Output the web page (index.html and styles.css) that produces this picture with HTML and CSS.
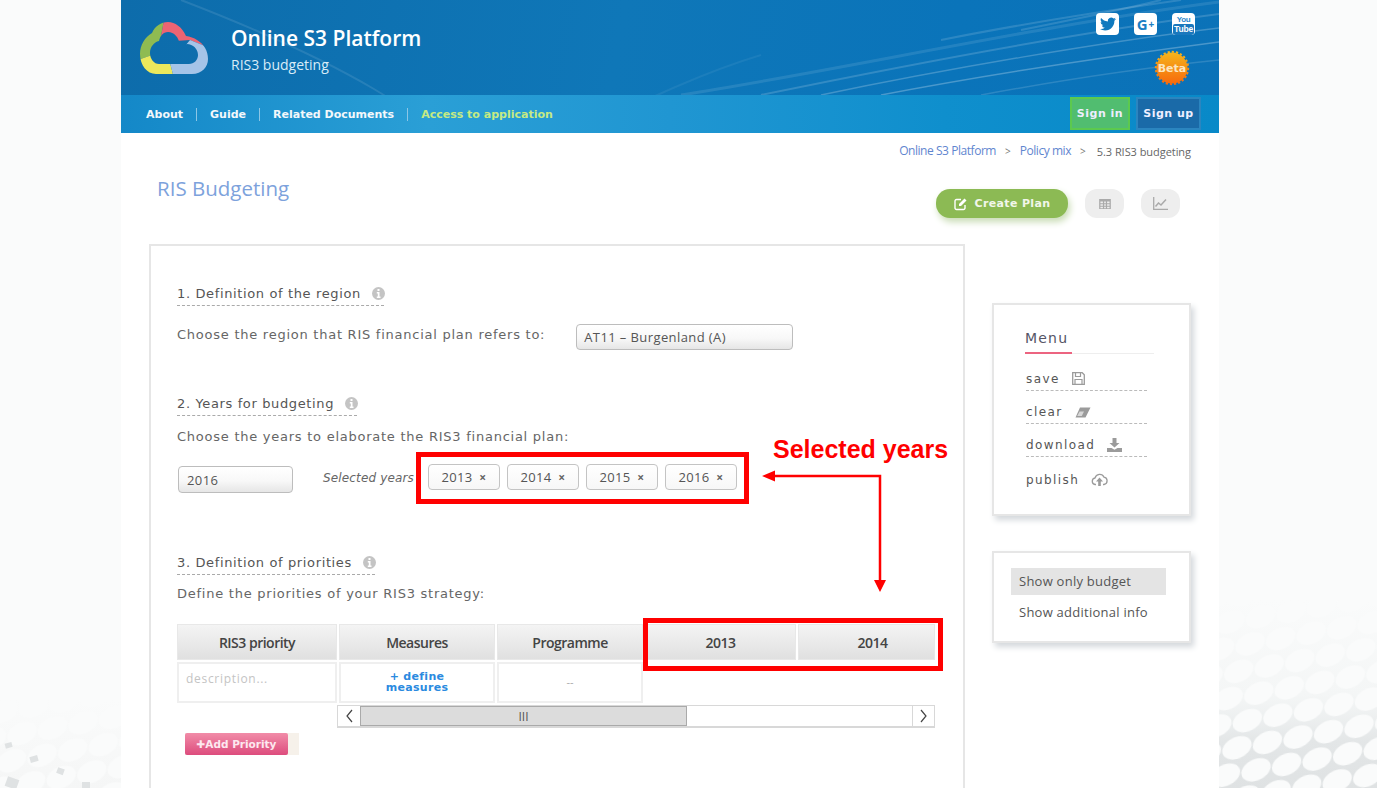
FILE: index.html
```html
<!DOCTYPE html>
<html lang="en">
<head>
<meta charset="utf-8">
<title>RIS Budgeting</title>
<link rel="stylesheet" href="styles.css">
</head>
<body>
<svg class="backdrop" width="1377" height="788" viewBox="0 0 1377 788" aria-hidden="true">
  <defs>
    <linearGradient id="fade" x1="0" y1="0" x2="0" y2="1">
      <stop offset="0" stop-color="#eef1f1" stop-opacity="0"/>
      <stop offset=".5" stop-color="#eef1f1" stop-opacity=".5"/>
      <stop offset=".75" stop-color="#e3e6e7"/>
      <stop offset="1" stop-color="#dfe2e3"/>
    </linearGradient>
    <linearGradient id="fadeL" x1="0" y1="0" x2="0" y2="1">
      <stop offset="0" stop-color="#f5f6f6" stop-opacity="0"/>
      <stop offset="1" stop-color="#f5f6f6"/>
    </linearGradient>
    <pattern id="dots" width="31" height="50" patternUnits="userSpaceOnUse" patternTransform="rotate(-10 1300 760)">
      <ellipse cx="15" cy="12" rx="15.5" ry="10.5" fill="#fafbfb" transform="rotate(-16 15 12)"/>
      <ellipse cx="0" cy="37" rx="15.5" ry="10.5" fill="#fafbfb" transform="rotate(-16 0 37)"/>
      <ellipse cx="31" cy="37" rx="15.5" ry="10.5" fill="#fafbfb" transform="rotate(-16 31 37)"/>
    </pattern>
  </defs>
  <rect x="1219" y="600" width="158" height="188" fill="url(#fade)"/>
  <rect x="1219" y="600" width="158" height="188" fill="url(#dots)"/>
  <rect x="0" y="700" width="121" height="88" fill="url(#fadeL)"/>
  <rect x="0" y="700" width="121" height="88" fill="url(#dots)"/>
  <g fill="#dfe2e3">
    <rect x="5" y="743" width="7" height="5" transform="rotate(-15 8 745)"/>
    <rect x="30" y="756" width="8" height="6" transform="rotate(-15 34 759)"/>
    <rect x="57" y="768" width="7" height="6" transform="rotate(20 60 771)"/>
    <rect x="6" y="778" width="12" height="10" transform="rotate(20 12 783)"/>
    <rect x="82" y="782" width="8" height="6"/>
  </g>
</svg>

<div class="page">
  <header class="site-head">
    <svg class="streaks" width="1098" height="133" viewBox="0 0 1098 133" aria-hidden="true">
      <g fill="none" stroke="#fff">
        <path d="M60 0C190 50 340 120 370 200" stroke-opacity=".1" stroke-width="2"/>
        <path d="M560 95C720 70 920 25 1098 2" stroke-opacity=".1" stroke-width="3"/>
        <path d="M640 95C800 62 960 32 1098 14" stroke-opacity=".16" stroke-width="2"/>
        <path d="M700 95C820 70 980 42 1098 28" stroke-opacity=".22" stroke-width="1.500"/>
        <path d="M760 95C860 76 990 56 1098 42" stroke-opacity=".26" stroke-width="1.500"/>
        <path d="M860 95C930 82 1020 68 1098 60" stroke-opacity=".14" stroke-width="1.500"/>
        <path d="M820 40C900 24 990 10 1060 0" stroke-opacity=".14" stroke-width="2"/>
        <path d="M900 30C950 20 1000 10 1040 0" stroke-opacity=".14" stroke-width="2"/>
        <path d="M460 133C520 100 590 70 640 55" stroke-opacity=".06" stroke-width="2"/>
      </g>
    </svg>
    <div class="brand-row">
      <svg class="logo" width="70" height="54" viewBox="0 0 70 54" aria-label="Logo">
        <defs>
          <clipPath id="ring">
            <path clip-rule="evenodd" d="M16 52H52C62 52 68 45 68 37C68 29 64 22 57 18C54 16 50 14.5 46 14C42 5 35 0 28 0C21 0 15 4 12 11C5 15 0 23 0 32C0 43 7 52 16 52ZM19 42H49C54 42 58 38 58 33C58 27 53 22 47 22L40 24C39 15 34 10 28 10C23 10 20 14 19 19C14 20 10 25 10 31C10 37 14 42 19 42Z"/>
          </clipPath>
        </defs>
        <g clip-path="url(#ring)">
          <polygon fill="#8fbb52" points="-2,-2 24,-2 20,20 12,33 -2,38"/>
          <polygon fill="#ec6473" points="24,-2 72,-2 72,27 50,18 20,20"/>
          <polygon fill="#ebe85c" points="-2,38 12,33 18,41 30,41 34,56 -2,56"/>
          <polygon fill="#a5c4e8" points="30,41 34,56 72,56 72,27 50,18 45,24"/>
        </g>
      </svg>
      <div class="brand-text">
        <div class="brand-title">Online S3 Platform</div>
        <div class="brand-sub">RIS3 budgeting</div>
      </div>
      <div class="head-right">
        <div class="socials">
          <a class="social">
            <svg width="16" height="16" viewBox="0 0 24 24"><path fill="#1079be" d="M23.953 4.57a10 10 0 01-2.825.775 4.958 4.958 0 002.163-2.723c-.951.555-2.005.959-3.127 1.184a4.92 4.92 0 00-8.384 4.482C7.69 8.095 4.067 6.13 1.64 3.162a4.822 4.822 0 00-.666 2.475c0 1.71.87 3.213 2.188 4.096a4.904 4.904 0 01-2.228-.616v.06a4.923 4.923 0 003.946 4.827 4.996 4.996 0 01-2.212.085 4.936 4.936 0 004.604 3.417 9.867 9.867 0 01-6.102 2.105c-.39 0-.779-.023-1.17-.067a13.995 13.995 0 007.557 2.209c9.053 0 13.998-7.496 13.998-13.985 0-.21 0-.42-.015-.63A9.935 9.935 0 0024 4.59z"/></svg>
          </a>
          <a class="social social-g">G<span class="plus">+</span></a>
          <a class="social social-yt"><span class="yt-you">You</span><span class="yt-tube">Tube</span></a>
        </div>
        <div class="beta">
          <svg width="36" height="36" viewBox="0 0 36 36" aria-hidden="true">
            <defs>
              <linearGradient id="betaFill" x1="0" y1="0" x2="0" y2="1">
                <stop offset="0" stop-color="#f5b51c"/>
                <stop offset="1" stop-color="#f76a0c"/>
              </linearGradient>
            </defs>
            <circle cx="18" cy="18" r="15.5" fill="url(#betaFill)"/>
            <circle cx="18" cy="18" r="16.2" fill="none" stroke="url(#betaFill)" stroke-width="2" stroke-dasharray="2.2 2"/>
          </svg>
          <span class="beta-label">Beta</span>
        </div>
      </div>
    </div>
    <nav class="nav-row">
      <a class="nav-link">About</a>
      <a class="nav-link">Guide</a>
      <a class="nav-link">Related Documents</a>
      <a class="nav-link nav-accent">Access to application</a>
      <div class="auth">
        <a class="auth-btn auth-in">Sign in</a>
        <a class="auth-btn auth-up">Sign up</a>
      </div>
    </nav>
  </header>

  <main class="content">
    <div class="crumbs">
      <a class="crumb">Online S3 Platform</a><span class="crumb-sep">&gt;</span>
      <a class="crumb">Policy mix</a><span class="crumb-sep">&gt;</span>
      <span class="crumb-now">5.3 RIS3 budgeting</span>
    </div>

    <div class="title-row">
      <h1 class="page-title">RIS Budgeting</h1>
      <div class="actions">
        <a class="create-btn">
          <svg width="14" height="14" viewBox="0 0 14 14" aria-hidden="true"><path fill="none" stroke="#fff" stroke-width="1.4" d="M11 8v3a1.5 1.5 0 01-1.5 1.5h-7A1.5 1.5 0 011 11V4a1.5 1.5 0 011.5-1.5H7"/><path fill="#fff" d="M5 7l5.5-5.5 2 2L7 9H5z"/></svg>
          Create Plan
        </a>
        <a class="round-btn">
          <svg width="12" height="10" viewBox="0 0 14 12" aria-hidden="true"><path fill="#aaa" fill-rule="evenodd" d="M0 0h14v12H0zM1.500 3v2h3V3zm4.500 0v2h2V3zm3.500 0v2h3V3zM1.500 6.200v1.800h3V6.200zm4.500 0v1.800h2V6.200zm3.500 0v1.800h3V6.200zM1.500 9.200V11h3V9.200zm4.500 0V11h2V9.200zm3.500 0V11h3V9.200z"/></svg>
        </a>
        <a class="round-btn">
          <svg width="15" height="13" viewBox="0 0 15 13" aria-hidden="true"><path fill="none" stroke="#aaa" stroke-width="1.300" d="M.7 0v12.300H15"/><path fill="none" stroke="#aaa" stroke-width="1.500" d="M2.500 9.500l3-3.500 2.500 2 5-5.500"/></svg>
        </a>
      </div>
    </div>

    <div class="columns">
      <section class="card">
        <div class="sec-head first">1. Definition of the region
          <svg class="info" width="13" height="13" viewBox="0 0 13 13" aria-hidden="true"><circle cx="6.500" cy="6.500" r="6.500" fill="#c4c4c4"/><rect x="5.500" y="2" width="2" height="2" fill="#fff"/><path fill="#fff" d="M4.800 5h2.700v4.500h1V11H4.800V9.500h1V6.400h-1z"/></svg>
        </div>
        <div class="region-row">
          <span class="prompt">Choose the region that RIS financial plan refers to:</span>
          <div class="select region-select">AT11 – Burgenland (A)</div>
        </div>

        <div class="sec-head second">2. Years for budgeting
          <svg class="info" width="13" height="13" viewBox="0 0 13 13" aria-hidden="true"><circle cx="6.500" cy="6.500" r="6.500" fill="#c4c4c4"/><rect x="5.500" y="2" width="2" height="2" fill="#fff"/><path fill="#fff" d="M4.800 5h2.700v4.500h1V11H4.800V9.500h1V6.400h-1z"/></svg>
        </div>
        <p class="prompt prompt-block">Choose the years to elaborate the RIS3 financial plan:</p>
        <div class="years-row">
          <div class="select year-select">2016</div>
          <span class="years-label">Selected years</span>
          <div class="tags">
            <span class="tag">2013 <b class="tag-x">×</b></span>
            <span class="tag">2014 <b class="tag-x">×</b></span>
            <span class="tag">2015 <b class="tag-x">×</b></span>
            <span class="tag">2016 <b class="tag-x">×</b></span>
          </div>
        </div>

        <div class="sec-head third">3. Definition of priorities
          <svg class="info" width="13" height="13" viewBox="0 0 13 13" aria-hidden="true"><circle cx="6.500" cy="6.500" r="6.500" fill="#c4c4c4"/><rect x="5.500" y="2" width="2" height="2" fill="#fff"/><path fill="#fff" d="M4.800 5h2.700v4.500h1V11H4.800V9.500h1V6.400h-1z"/></svg>
        </div>
        <p class="prompt prompt-block tight">Define the priorities of your RIS3 strategy:</p>

        <div class="grid-table">
          <div class="th">RIS3 priority</div>
          <div class="th">Measures</div>
          <div class="th">Programme</div>
          <div class="th">2013</div>
          <div class="th th-clipped">2014</div>
          <div class="td td-desc">description...</div>
          <div class="td td-measures"><a class="define">+ define<br>measures</a></div>
          <div class="td td-dash">--</div>
        </div>
        <div class="scrollbar">
          <span class="scroll-arrow"><svg width="9" height="14" viewBox="0 0 9 14" aria-hidden="true"><path fill="none" stroke="#444" stroke-width="1.200" d="M7 1L2 7l5 6"/></svg></span>
          <span class="scroll-thumb">III</span>
          <span class="scroll-track"></span>
          <span class="scroll-arrow end"><svg width="9" height="14" viewBox="0 0 9 14" aria-hidden="true"><path fill="none" stroke="#444" stroke-width="1.200" d="M2 1l5 6-5 6"/></svg></span>
        </div>
        <div class="add-wrap"><a class="add-btn">✚Add Priority</a></div>
      </section>

      <aside class="side">
        <div class="side-card menu-card">
          <div class="menu-title"><span class="menu-title-text">Menu</span></div>
          <a class="menu-item">save
            <svg width="13" height="13" viewBox="0 0 13 13" aria-hidden="true"><path fill="none" stroke="#9b9b9b" stroke-width="1.300" d="M.7.7h9.500l2.100 2.100v9.500H.7z"/><path fill="none" stroke="#9b9b9b" stroke-width="1.200" d="M3.500 1v3.500h5V1M3 12V7.500h7V12"/></svg>
          </a>
          <a class="menu-item">clear
            <svg width="16" height="11" viewBox="0 0 16 11" aria-hidden="true"><path fill="#9b9b9b" d="M5 .5h10.500L10.500 10.500H.5z"/><path fill="#fff" d="M4.600 4.500h4.400L6.800 9H2.200z" opacity=".6"/></svg>
          </a>
          <a class="menu-item">download
            <svg width="15" height="14" viewBox="0 0 15 14" aria-hidden="true"><path fill="#9b9b9b" d="M5.500 0h4v5h3l-5 4.500-5-4.500h3zM0 10h4.500l3 1.800 3-1.800H15v4H0z"/></svg>
          </a>
          <a class="menu-item last">publish
            <svg width="17" height="13" viewBox="0 0 17 13" aria-hidden="true"><path fill="none" stroke="#9b9b9b" stroke-width="1.300" d="M5 11.500H4A3.300 3.300 0 014 5a4.800 4.800 0 019-.8A3.700 3.700 0 0113 11.500h-1"/><path fill="#9b9b9b" d="M8.500 4.500L12 8.500H9.800V13H7.200V8.500H5z"/></svg>
          </a>
        </div>
        <div class="side-card view-card">
          <a class="view-item active">Show only budget</a>
          <a class="view-item">Show additional info</a>
        </div>
      </aside>
    </div>
  </main>
</div>

<div class="mark mark-tags"></div>
<div class="mark mark-years"></div>
<div class="mark-text">Selected years</div>
<svg class="mark-arrow" width="130" height="130" viewBox="0 0 130 130" aria-hidden="true">
  <path fill="none" stroke="#f00" stroke-width="2.500" d="M12 13H118V119"/>
  <path fill="#f00" d="M0 13l13-5.500v11zM118 129l-6-12h12z"/>
</svg>
</body>
</html>
```

FILE: styles.css
```css
* { box-sizing: border-box; }
html, body { margin: 0; height: 788px; overflow: hidden; }
body {
  background: #fafbfb;
  font-family: "Open Sans", sans-serif;
  color: #555;
  position: relative;
}
a { color: inherit; text-decoration: none; }

.backdrop { position: absolute; left: 0; top: 0; z-index: 0; }

.page {
  position: relative;
  z-index: 1;
  width: 1098px;
  height: 788px;
  margin-left: 121px;
  background: #fff;
  overflow: hidden;
}

/* Header */
.site-head {
  position: relative;
  height: 133px;
  background: linear-gradient(100deg, #0d6cab 0%, #0f77b8 45%, #0a74ba 75%, #0b72b8 100%);
  color: #fff;
  display: flex;
  flex-direction: column;
}
.streaks { position: absolute; left: 0; top: 0; }
.brand-row {
  position: relative;
  height: 95px;
  display: flex;
  align-items: flex-start;
  padding: 22px 24px 0 19px;
}
.logo { flex: none; }
.brand-text { margin-left: 21px; }
.brand-title { font-size: 21px; font-weight: 600; line-height: 30px; margin-top: 1px; }
.brand-sub { font-size: 14px; line-height: 20px; margin-top: 2px; color: #d9ecf8; }
.head-right {
  margin-left: auto;
  margin-top: -9px;
  display: flex;
  flex-direction: column;
  align-items: flex-end;
}
.socials { display: flex; gap: 15px; }
.social {
  width: 23px;
  height: 22px;
  background: #fff;
  border-radius: 4px;
  display: flex;
  align-items: center;
  justify-content: center;
  color: #1a7fc4;
  overflow: hidden;
}
.social-g { font: 700 15px/22px "Open Sans", sans-serif; }
.plus { font-size: 10px; margin-left: 1px; }
.social-yt { flex-direction: column; font-family: "Liberation Sans", sans-serif; font-weight: 700; padding-top: 1px; }
.yt-you { font-size: 8px; line-height: 9px; color: #2b88cc; letter-spacing: -.3px; }
.yt-tube { font-size: 8.500px; line-height: 11px; background: #1a78bd; color: #fff; border-radius: 2px; padding: 0 1px; letter-spacing: -.2px; }
.beta {
  position: relative;
  width: 36px;
  height: 36px;
  margin-top: 15px;
  margin-right: 5px;
  display: flex;
  align-items: center;
  justify-content: center;
}
.beta svg { position: absolute; left: 0; top: 0; }
.beta-label { position: relative; font: 700 11px/1 "DejaVu Sans", sans-serif; color: #fbe6c0; }

.nav-row {
  position: relative;
  height: 38px;
  display: flex;
  align-items: center;
  padding: 0 18px 0 25px;
  background: linear-gradient(90deg, #1488c8 0%, #2a9fd6 28%, #2096d2 50%, #0f8fcd 75%, #0889c8 100%);
}
.nav-link {
  font: 700 11px/13px "DejaVu Sans", sans-serif;
  color: #f3f8fb;
  padding-right: 13px;
  margin-right: 13px;
  border-right: 1px solid #8cc6e6;
}
.nav-accent { color: #c5ea84; border-right: 0; }
.auth { margin-left: auto; display: flex; gap: 6px; align-self: flex-start; margin-top: 2px; }
.auth-btn {
  height: 33px;
  display: flex;
  align-items: center;
  justify-content: center;
  font: 700 11px/1 "DejaVu Sans", sans-serif;
  letter-spacing: .5px;
  color: #eef;
}
.auth-in { width: 60px; background: #51bd70; border: 2px solid #5cc94e; }
.auth-up { width: 65px; background: #1a6aa8; border: 2px solid #2b85bf; }

/* Main */
.content { padding: 0 28px; }
.crumbs {
  height: 35px;
  display: flex;
  justify-content: flex-end;
  align-items: center;
  font-size: 12px;
}
.crumb { color: #5f86cf; letter-spacing: -.45px; }
.crumb-sep { color: #777; margin: 0 9px; font-size: 10px; }
.crumb-now { color: #666; font-size: 11px; letter-spacing: -.05px; margin-left: 2px; margin-top: 2px; }

.title-row { height: 76px; display: flex; justify-content: space-between; align-items: flex-start; }
.page-title {
  margin: 6px 0 0 8px;
  font-size: 20.500px;
  font-weight: 400;
  line-height: 28px;
  color: #7da2dc;
}
.actions { display: flex; gap: 17px; padding: 21px 11px 0 0; }
.create-btn {
  width: 132px;
  height: 29px;
  border-radius: 14px;
  background: #8cba54;
  box-shadow: 2px 4px 7px #c9dcb5;
  color: #f1f6ea;
  font: 700 11px/29px "DejaVu Sans", sans-serif;
  letter-spacing: .35px;
  display: flex;
  align-items: center;
  justify-content: center;
  gap: 7px;
}
.round-btn {
  width: 39px;
  height: 29px;
  border-radius: 12px;
  background: #eee;
  display: flex;
  align-items: center;
  justify-content: center;
}

.columns { display: grid; grid-template-columns: 816px 199px; column-gap: 27px; align-items: start; }

.card {
  height: 700px;
  border: 2px solid #e6e6e6;
  padding: 0 0 0 26px;
}
.sec-head {
  display: flex;
  align-items: center;
  gap: 11px;
  height: 22px;
  padding-bottom: 2px;
  border-bottom: 1px dashed #aaa;
  font: 13px/18px "DejaVu Sans", sans-serif;
  letter-spacing: .63px;
  color: #555;
  white-space: nowrap;
}
.sec-head.first { margin-top: 38px; width: 207px; }
.sec-head.second { margin-top: 44px; width: 180px; }
.sec-head.third { margin-top: 60px; width: 198px; }
.info { flex: none; }
.prompt { font: 13px/18px "DejaVu Sans", sans-serif; letter-spacing: .75px; color: #666; white-space: nowrap; }
.prompt-block { margin: 12px 0 0; }
.prompt-block.tight { margin-top: 10px; }
.region-row { display: flex; align-items: center; gap: 31px; margin-top: 18px; height: 26px; }
.region-row .prompt { margin-top: -5px; }
.select {
  height: 26px;
  border: 1px solid #bdbdbd;
  border-radius: 4px;
  background: linear-gradient(180deg, #fff 0%, #f8f8f8 55%, #e6e6e6 100%);
  font-size: 13px;
  line-height: 24px;
  color: #555;
  padding-left: 7px;
  letter-spacing: .4px;
}
.region-select { width: 217px; }
.year-select { width: 115px; height: 27px; margin: 2px 0 0 1px; padding-left: 8px; line-height: 27px; }
.years-row { display: flex; align-items: flex-start; margin-top: 18px; height: 29px; }
.years-label { margin: 5px 0 0 30px; width: 105px; font: italic 12px/18px "DejaVu Sans", sans-serif; color: #666; letter-spacing: .15px; white-space: nowrap; }
.tags { display: flex; gap: 7px; }
.tag {
  width: 72px;
  height: 26px;
  border: 1px solid #c4c4c4;
  border-radius: 4px;
  background: linear-gradient(180deg, #fff 0%, #f7f7f7 100%);
  font-size: 13px;
  line-height: 24px;
  text-align: center;
  color: #555;
  letter-spacing: .3px;
}
.tag-x { font-size: 12px; margin-left: 3px; color: #666; }

.grid-table {
  display: grid;
  grid-template-columns: 160px 156px 146px 151px 137px;
  grid-template-rows: 36px 41px;
  gap: 2px;
  margin-top: 21px;
}
.th {
  background: linear-gradient(180deg, #f4f4f4 0%, #e0e0e0 100%);
  border: 1px solid #e8e8e8;
  display: flex;
  align-items: center;
  justify-content: center;
  font-size: 14px;
  font-weight: 600;
  letter-spacing: -.5px;
  color: #444;
}
.th-clipped { padding-left: 12px; }
.td { border: 2px solid #efefef; }
.td-desc { padding: 6px 0 0 7px; font-size: 12px; letter-spacing: .7px; color: #c4c4c4; line-height: 18px; }
.td-measures { padding: 7px 8px; display: flex; }
.define {
  flex: 1;
  text-align: center;
  font: 700 11px/11px "DejaVu Sans", sans-serif;
  letter-spacing: .3px;
  color: #2a8ae0;
  background: #fff;
}
.td-dash { display: flex; align-items: center; justify-content: center; color: #aaa; font-size: 11px; padding-bottom: 3px; }

.scrollbar {
  display: flex;
  width: 598px;
  height: 23px;
  margin: 2px 0 0 160px;
  border: 1px solid #d8d8d8;
  border-width: 1px 1px 2px 1px;
}
.scroll-arrow { width: 22px; display: flex; align-items: center; justify-content: center; background: #fff; flex: none; }
.scroll-arrow.end { border-left: 1px solid #d8d8d8; }
.scroll-thumb {
  width: 327px;
  background: #dcdcdc;
  border: 1px solid #aaa;
  display: flex;
  align-items: center;
  justify-content: center;
  font-size: 12px;
  color: #555;
}
.scroll-track { flex: 1; }

.add-wrap {
  display: flex;
  width: 114px;
  margin: 5px 0 0 8px;
  background: #f6f1ea;
}
.add-btn {
  width: 103px;
  height: 22px;
  border-radius: 2px;
  background: linear-gradient(180deg, #f18ca8 0%, #dd4c7d 100%);
  color: #fde8ef;
  font: 700 10.500px/22px "DejaVu Sans", sans-serif;
  text-align: center;
}

/* Side */
.side { padding-top: 59px; display: flex; flex-direction: column; gap: 35px; }
.side-card {
  border: 2px solid #e6e6e6;
  background: #fff;
  box-shadow: 3px 4px 6px #d4d8dc;
}
.menu-card { height: 213px; padding: 21px 0 0 31px; }
.menu-title {
  width: 129px;
  height: 28px;
  border-bottom: 1px solid #eee;
  font: 14px/24px "DejaVu Sans", sans-serif;
  letter-spacing: 1.200px;
  color: #556;
}
.menu-title-text { display: inline-block; width: 47px; height: 28px; border-bottom: 2px solid #ec6480; }
.menu-item {
  display: flex;
  align-items: center;
  gap: 12px;
  width: 121px;
  height: 33px;
  margin-left: 1px;
  border-bottom: 1px dashed #bbb;
  font: 12px/16px "DejaVu Sans", sans-serif;
  letter-spacing: 1.400px;
  color: #555;
  padding-top: 10px;
}
.menu-title + .menu-item { margin-top: 5px; height: 32px; padding-top: 8px; }
.menu-item.last { border-bottom: 0; height: 36px; padding-top: 9px; }
.view-card { height: 92px; padding: 15px 0 0 17px; }
.view-item {
  display: block;
  width: 155px;
  height: 27px;
  padding-left: 8px;
  font-size: 13px;
  line-height: 27px;
  letter-spacing: .25px;
  color: #555;
}
.view-item.active { background: #e4e4e4; margin-bottom: 4px; }

/* Red annotations over the screenshot */
.mark { position: absolute; z-index: 2; border: 5px solid #f00; }
.mark-tags { left: 416px; top: 452px; width: 333px; height: 52px; }
.mark-years { left: 643px; top: 618px; width: 300px; height: 53px; }
.mark-text {
  position: absolute;
  z-index: 2;
  left: 773px;
  top: 434px;
  font: 700 25px/30px "Liberation Sans", sans-serif;
  color: #f00;
}
.mark-arrow { position: absolute; z-index: 2; left: 762px; top: 463px; }
```
